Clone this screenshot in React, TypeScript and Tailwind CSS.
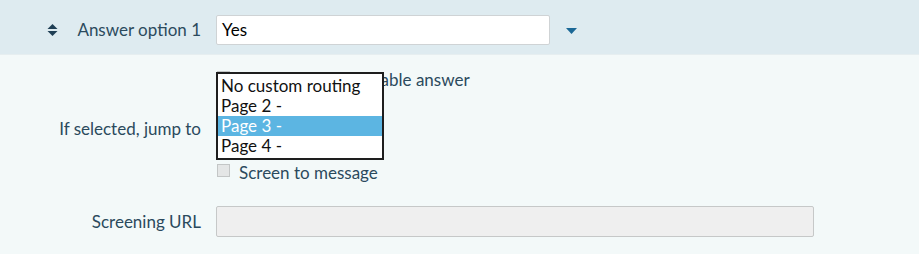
import React from 'react';

const font = { fontFamily: 'Lato, "Open Sans", sans-serif' };

function SortIcon() {
  return (
    <svg width="11" height="12" viewBox="0 0 11 12" className="text-[#1f3f55]">
      <path d="M5.5 0 L10.5 5 L0.5 5 Z" fill="currentColor" />
      <path d="M0.5 7 L10.5 7 L5.5 12 Z" fill="currentColor" />
    </svg>
  );
}

function Checkbox() {
  return <span className="inline-block w-[13px] h-[13px] mb-[6px] bg-[#e4e6e6] border border-[#c3c6c6] shrink-0" />;
}

export default function App() {
  const options = ['No custom routing', 'Page 2 -', 'Page 3 -', 'Page 4 -'];

  return (
    <div className="w-[919px] h-[254px] bg-[#f3f9f9] text-[#2b4a5d] text-[17px] overflow-hidden" style={font}>
      {/* Header row */}
      <div className="h-[54px] bg-[#deebf0] flex items-center pt-[6px]">
        <div className="w-[201px] flex items-center justify-end">
          <SortIcon />
          <span className="ml-[19px]">Answer option 1</span>
        </div>
        <div className="ml-[15px] w-[334px] h-[30px] bg-white border border-[#cfd3d5] rounded-[2px] flex items-center pl-[5px] text-black">
          Yes
        </div>
        <svg width="11" height="6" viewBox="0 0 11 6" className="ml-[16px] mt-[2px]">
          <path d="M0 0 L11 0 L5.5 6 Z" fill="#1b6896" />
        </svg>
      </div>

      {/* Body */}
      <div className="relative border-t border-[#e6eef0]">
        <div className="flex items-center mt-[16px] h-[18px] pl-[217px] gap-[9px]">
          <Checkbox />
          <span>Mark as not acceptable answer</span>
        </div>

        <div className="flex items-center mt-[25px] h-[30px]">
          <div className="w-[201px] text-right">If selected, jump to</div>
          <div className="ml-[15px] w-[168px] h-[30px] bg-white" />
        </div>

        <div className="flex items-center mt-[20px] h-[18px] pl-[217px] gap-[9px]">
          <Checkbox />
          <span>Screen to message</span>
        </div>

        <div className="flex items-center mt-[24px] h-[31px]">
          <div className="w-[201px] text-right">Screening URL</div>
          <div className="ml-[15px] w-[598px] h-[31px] bg-[#efefef] border border-[#c6c8c8] rounded-[2px]" />
        </div>

        {/* Open dropdown list */}
        <div className="absolute left-[216px] top-[17px] w-[168px] py-[2px] bg-white border-2 border-[#1e1e1e] text-[#111]">
          {options.map((o, i) => (
            <div
              key={o}
              className={`h-[20px] leading-[20px] pl-[3px] ${i === 2 ? 'bg-[#5cb5e2] text-white' : ''}`}
            >
              {o}
            </div>
          ))}
        </div>
      </div>
    </div>
  );
}
